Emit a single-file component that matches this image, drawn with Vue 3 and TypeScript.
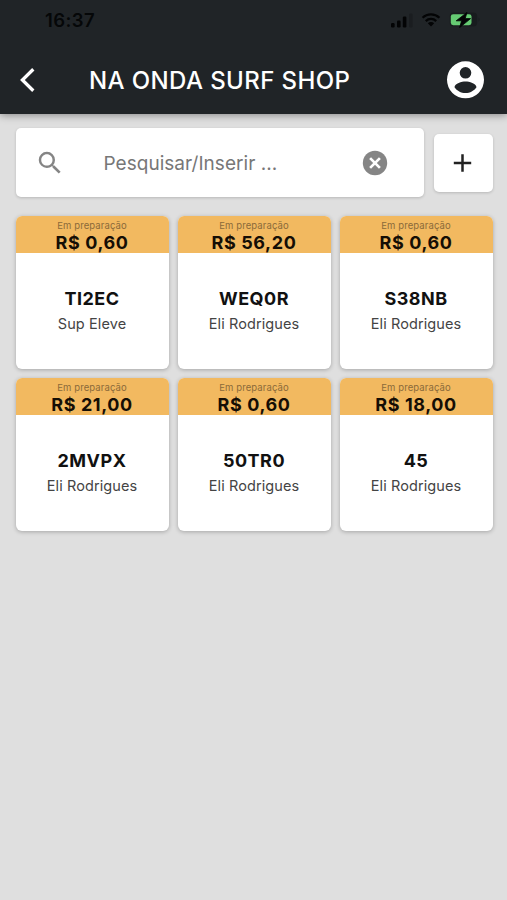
<script setup lang="ts">
import { ref } from 'vue'

interface Order {
  code: string
  customer: string
  total: string
  status: string
}

const query = ref<string>('')

const orders: Order[] = [
  { code: 'TI2EC', customer: 'Sup Eleve', total: 'R$ 0,60', status: 'Em preparação' },
  { code: 'WEQ0R', customer: 'Eli Rodrigues', total: 'R$ 56,20', status: 'Em preparação' },
  { code: 'S38NB', customer: 'Eli Rodrigues', total: 'R$ 0,60', status: 'Em preparação' },
  { code: '2MVPX', customer: 'Eli Rodrigues', total: 'R$ 21,00', status: 'Em preparação' },
  { code: '50TR0', customer: 'Eli Rodrigues', total: 'R$ 0,60', status: 'Em preparação' },
  { code: '45', customer: 'Eli Rodrigues', total: 'R$ 18,00', status: 'Em preparação' },
]
</script>

<template>
  <div class="screen">
    <header class="header">
      <div class="status-bar">
        <span class="clock">16:37</span>
        <div class="indicators">
          <svg class="signal" width="24" height="16" viewBox="0 0 24 16">
            <rect x="1" y="11" width="3.6" height="4.5" rx="1.2" />
            <rect x="7" y="8.5" width="3.6" height="7" rx="1.2" />
            <rect x="12.8" y="4.5" width="3.6" height="11" rx="1.2" />
            <rect x="19" y="1.5" width="3.6" height="14" rx="1.2" opacity="0.2" />
          </svg>
          <svg class="wifi" width="20" height="16" viewBox="0 0 20 16">
            <path d="M1.6 5.8a12 12 0 0 1 16.8 0M4.8 9.1a7.4 7.4 0 0 1 10.4 0" fill="none" stroke="#030405" stroke-width="2.3" />
            <path d="M10 14.6l-3.2-3.4a4.6 4.6 0 0 1 6.4 0z" />
          </svg>
          <svg class="battery" width="33" height="16" viewBox="0 0 33 16">
            <rect x="0.7" y="0.5" width="27.5" height="14" rx="4" fill="#181c1e" />
            <rect x="1.8" y="2.2" width="20.7" height="11" rx="2.4" fill="#66cb73" />
            <path d="M18 0.4L7.2 8.8h5.4l-2 6.8L21.6 6.6h-5.4z" stroke="#030405" stroke-width="0.8" />
            <path d="M29.5 5.5v4.2c1.3-.6 1.3-3.6 0-4.2z" fill="#181c1e" />
          </svg>
        </div>
      </div>
      <div class="toolbar">
        <button class="icon-button" aria-label="Voltar">
          <svg width="18" height="26" viewBox="0 0 18 26">
            <path d="M16.3 2.3L5.4 13l10.9 10.7" fill="none" stroke="#fff" stroke-width="3.3" />
          </svg>
        </button>
        <h1 class="title">NA ONDA SURF SHOP</h1>
        <button class="icon-button" aria-label="Conta">
          <svg width="38" height="38" viewBox="0 0 38 38">
            <path fill="#fff" fill-rule="evenodd" d="M18.5 .3a18.5 18.5 0 1 0 0 37a18.5 18.5 0 0 0 0-37zM18.5 6a5.8 5.8 0 1 1 0 11.6a5.8 5.8 0 0 1 0-11.6zM18.5 32.100c-4.6 0-8.6-2.3-11-5.8c.1-3.7 7.4-5.7 11-5.7s10.9 2 11 5.7c-2.4 3.5-6.4 5.8-11 5.8z" />
          </svg>
        </button>
      </div>
    </header>

    <main class="content">
      <div class="search-row">
        <div class="search">
          <svg class="search-icon" width="30" height="30" viewBox="0 0 24 24">
            <path fill="#858585" d="M15.5 14h-.79l-.28-.27A6.471 6.471 0 0 0 16 9.5A6.5 6.5 0 1 0 9.5 16c1.61 0 3.09-.59 4.23-1.57l.27.28v.79l5 4.99L20.49 19l-4.99-5zm-6 0C7.01 14 5 11.99 5 9.5S7.01 5 9.5 5S14 7.01 14 9.5S11.99 14 9.5 14z" />
          </svg>
          <input v-model="query" class="search-input" type="text" placeholder="Pesquisar/Inserir ..." />
          <button class="icon-button" aria-label="Limpar" @click="query = ''">
            <svg width="26" height="26" viewBox="0 0 26 26">
              <circle cx="13" cy="13" r="12.2" fill="#858585" />
              <path d="M8.1 8.1l9.8 9.8M17.9 8.1l-9.8 9.8" stroke="#fff" stroke-width="2.7" />
            </svg>
          </button>
        </div>
        <button class="add" aria-label="Adicionar">
          <svg width="20" height="20" viewBox="0 0 20 20">
            <path d="M9.5 1.3v17.4M.8 10h17.4" stroke="#222" stroke-width="2.5" />
          </svg>
        </button>
      </div>

      <section class="grid">
        <article v-for="order in orders" :key="order.code" class="card">
          <div class="band">
            <span class="state">{{ order.status }}</span>
            <strong class="total">{{ order.total }}</strong>
          </div>
          <div class="body">
            <strong class="code">{{ order.code }}</strong>
            <span class="customer">{{ order.customer }}</span>
          </div>
        </article>
      </section>
    </main>
  </div>
</template>

<style>
body {
  background: #dfdfdf;
}
</style>

<style scoped>
.screen {
  min-height: 900px;
  background: #dfdfdf;
  font-family: Inter, "Liberation Sans", sans-serif;
  color: #111;
}

.screen * {
  box-sizing: border-box;
}

button {
  border: 0;
  padding: 0;
  background: none;
  font: inherit;
}

.header {
  position: relative;
  height: 114px;
  background: #202427;
  box-shadow: 0 1px 8px rgba(0, 0, 0, 0.42);
}

.status-bar {
  display: flex;
  align-items: center;
  justify-content: space-between;
  height: 39px;
  padding: 0 25px 0 45px;
}

.clock {
  padding-top: 1px;
  color: #050708;
  font-size: 18.5px;
  font-weight: 600;
  letter-spacing: 0.4px;
}

.indicators {
  display: flex;
  align-items: center;
  fill: #030405;
}

.signal {
  margin-right: 7px;
}

.wifi {
  margin-right: 8px;
}

.toolbar {
  display: flex;
  align-items: center;
  height: 82px;
  padding: 0 22px 0 17px;
}

.icon-button {
  display: flex;
  flex: none;
}

.title {
  flex: 1;
  margin: 0;
  padding: 2px 0 0 54px;
  color: #fff;
  font-size: 24px;
  font-weight: 500;
  line-height: 30px;
  letter-spacing: 0.4px;
  white-space: nowrap;
}

.content {
  padding: 14px 14.5px 0 15.5px;
}

.search-row {
  display: flex;
  align-items: center;
  gap: 10px;
}

.search {
  display: flex;
  flex: 1;
  min-width: 0;
  align-items: center;
  height: 69px;
  padding: 0 36px 0 19px;
  border-radius: 5px;
  background: #fff;
  box-shadow: 0 1px 3px rgba(0, 0, 0, 0.18);
}

.search-icon {
  flex: none;
}

.search-input {
  flex: 1;
  min-width: 0;
  height: 32px;
  margin: 0;
  padding: 2px 0 0 39px;
  border: 0;
  outline: 0;
  background: transparent;
  color: #333;
  font-family: inherit;
  font-size: 19px;
  letter-spacing: 0.03px;
}

.search-input::placeholder {
  color: #777;
  opacity: 1;
}

.add {
  display: flex;
  flex: none;
  align-items: center;
  justify-content: center;
  width: 58.5px;
  height: 58px;
  border-radius: 5px;
  background: #fff;
  box-shadow: 0 1px 3px rgba(0, 0, 0, 0.18);
}

.grid {
  display: grid;
  grid-template-columns: repeat(3, 1fr);
  gap: 9px;
  margin-top: 19px;
}

.card {
  height: 153px;
  overflow: hidden;
  border-radius: 6px;
  background: #fff;
  box-shadow: 0 1px 4px rgba(0, 0, 0, 0.26);
  text-align: center;
}

.band {
  display: flex;
  flex-direction: column;
  height: 37.4px;
  padding-top: 4px;
  background: #f2b960;
}

.state {
  color: #8a6a3a;
  font-size: 9.5px;
  line-height: 12px;
  letter-spacing: 0.1px;
}

.total {
  color: #150e05;
  font-size: 18px;
  font-weight: 700;
  line-height: 21px;
  letter-spacing: 0.6px;
}

.body {
  display: flex;
  flex-direction: column;
  padding-top: 33.6px;
}

.code {
  font-size: 18px;
  font-weight: 700;
  line-height: 24px;
  letter-spacing: 0.5px;
}

.customer {
  margin-top: 3px;
  color: #444;
  font-size: 14.5px;
  line-height: 20px;
  letter-spacing: 0.1px;
}
</style>
